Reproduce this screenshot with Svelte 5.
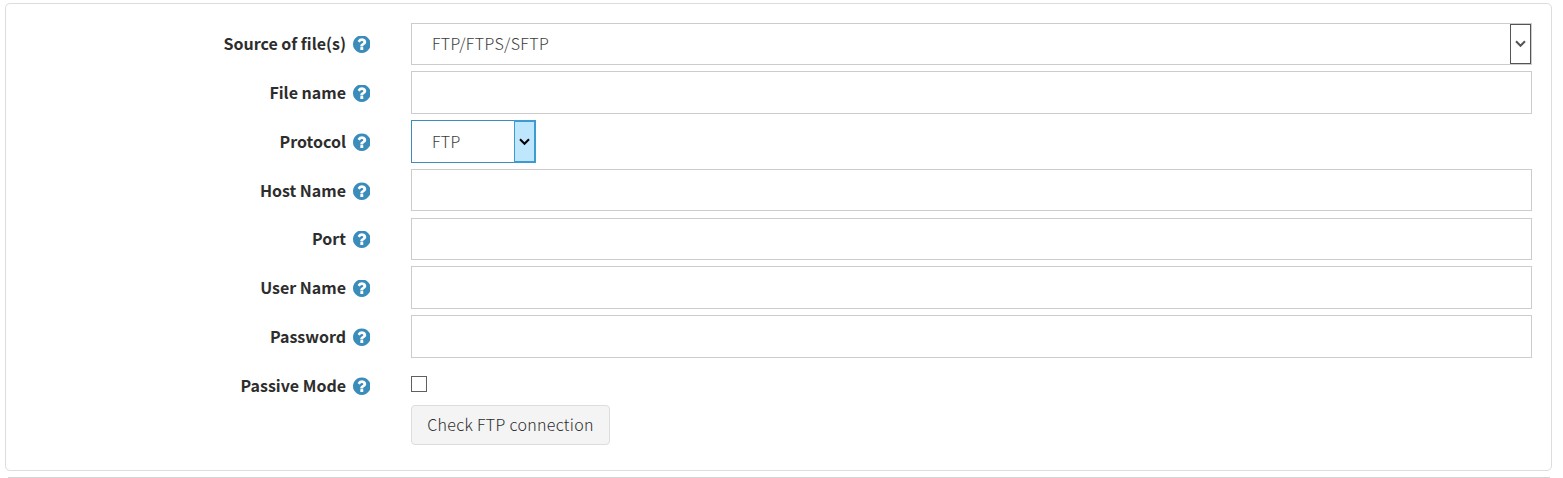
<script>
  const fields = [
    { label: 'Source of file(s)', type: 'select', value: 'FTP/FTPS/SFTP' },
    { label: 'File name', type: 'text' },
    { label: 'Protocol', type: 'short', value: 'FTP' },
    { label: 'Host Name', type: 'text' },
    { label: 'Port', type: 'text' },
    { label: 'User Name', type: 'text' },
    { label: 'Password', type: 'text' },
    { label: 'Passive Mode', type: 'check' }
  ];
</script>

<main>
  <section class="panel">
    {#each fields as field}
      <div class="row">
        <div class="label">
          <span>{field.label}</span>
          <svg class="help" viewBox="0 0 1536 1536" aria-hidden="true">
            <path fill="#3a8cbb" d="M896 1248v-192q0-14-9-23t-23-9H672q-14 0-23 9t-9 23v192q0 14 9 23t23 9h192q14 0 23-9t9-23zm256-672q0-88-55.500-163T958 297t-170-41q-243 0-371 213-15 24 8 42l132 100q7 6 19 6 16 0 25-12 53-68 86-92 34-24 86-24 48 0 85.500 26t37.500 59q0 38-20 61t-68 45q-63 28-115.500 86.500T640 892v36q0 14 9 23t23 9h192q14 0 23-9t9-23q0-19 21.500-49.500T972 829q32-18 49-28.500t46-35 44.500-48 28-60.500 12.500-81zm384 192q0 209-103 385.500T1153.500 1433 768 1536t-385.500-103T103 1153.500 0 768t103-385.500T382.500 103 768 0t385.500 103T1433 382.500 1536 768z" />
          </svg>
        </div>
        {#if field.type === 'check'}
          <span class="checkbox"></span>
        {:else}
          <div class="field {field.type}">
            {#if field.value}
              <span class="value">{field.value}</span>
              <span class="arrow">
                <svg width="11" height="8" viewBox="0 0 11 8" aria-hidden="true">
                  <path d="M1 1.300L5.500 5.800L10 1.300" fill="none" stroke="currentColor" stroke-width="2" />
                </svg>
              </span>
            {/if}
          </div>
        {/if}
      </div>
    {/each}
    <button>Check FTP connection</button>
  </section>
  <div class="next"></div>
</main>

<style>
  :global(body) {
    background: #fff;
  }
  main {
    box-sizing: border-box;
    height: 478px;
    padding: 3px 11px 0 5px;
    overflow: hidden;
    font-family: 'Noto Sans CJK SC', 'Noto Sans', sans-serif;
    font-size: 16px;
    color: #2d2d2d;
  }
  .panel {
    box-sizing: border-box;
    height: 468px;
    padding: 18.600px 19px 0 0;
    border: 1px solid #ddd;
    border-radius: 5px;
  }
  .row {
    display: flex;
    height: 48.750px;
  }
  .label {
    box-sizing: border-box;
    width: 405px;
    height: 42.600px;
    padding-right: 40.800px;
    display: flex;
    flex: none;
    align-items: center;
    justify-content: flex-end;
    gap: 6.600px;
    font-weight: 700;
    line-height: 24px;
    white-space: nowrap;
  }
  .label span {
    padding-bottom: 0.900px;
  }
  .help {
    width: 17.600px;
    height: 17.600px;
    padding-top: 1.400px;
    flex: none;
  }
  .field {
    box-sizing: border-box;
    flex: 1;
    height: 42.600px;
    border: 1px solid #ccc;
    display: flex;
    align-items: stretch;
    justify-content: space-between;
  }
  .value {
    padding-left: 20px;
    line-height: 39.400px;
    letter-spacing: 0.360px;
    color: #3c3c3c;
    font-weight: 300;
  }
  .arrow {
    box-sizing: border-box;
    width: 21px;
    display: flex;
    align-items: center;
    justify-content: center;
    border: 1px solid #555;
    color: #555;
  }
  .short {
    flex: none;
    width: 125px;
    border-color: #3c8dbc;
  }
  .short .value {
    line-height: 40px;
  }
  .short .arrow {
    width: 22px;
    padding-top: 1px;
    margin: -1px;
    border: 2px solid #3c9bd0;
    border-left-width: 1px;
    background: #bee6fd;
    color: #000;
  }
  .checkbox {
    box-sizing: border-box;
    width: 16px;
    height: 16px;
    margin-top: 12px;
    border: 1px solid #606060;
  }
  button {
    display: block;
    box-sizing: border-box;
    width: 199px;
    height: 40px;
    margin: -7.600px 0 0 405px;
    padding: 0 0 2px;
    border: 1px solid #ddd;
    border-radius: 4px;
    background: #f4f4f4;
    color: #2c2c2c;
    font: 300 16px/24px 'Noto Sans CJK SC', 'Noto Sans', sans-serif;
    letter-spacing: 0.320px;
    white-space: nowrap;
  }
  .next {
    height: 10px;
    margin: 6px 2px 0 3px;
    border-top: 1px solid #d5d5d5;
  }
</style>
